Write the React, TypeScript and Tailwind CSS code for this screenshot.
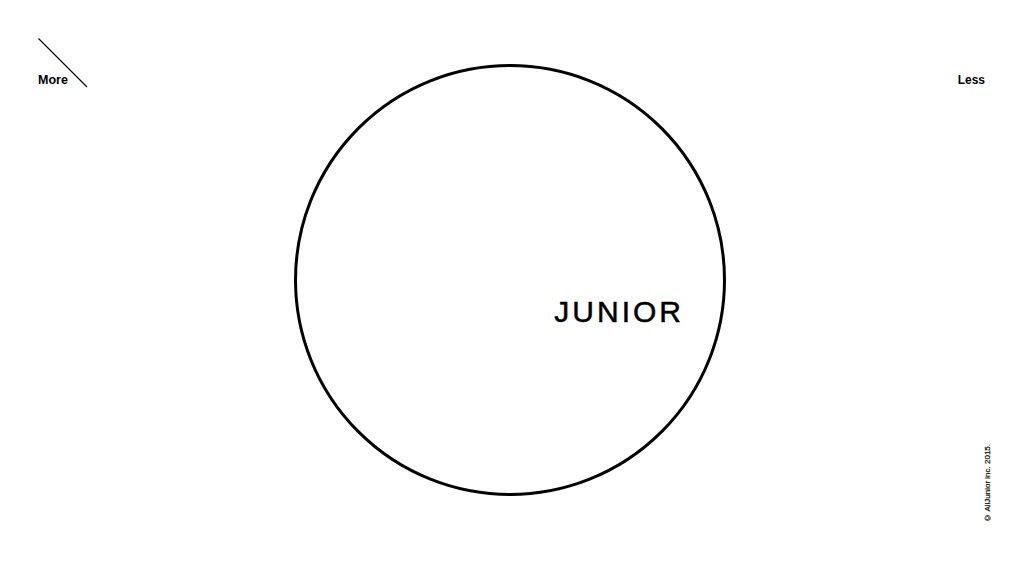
import React from 'react';

const font = { fontFamily: '"Liberation Sans", Arial, sans-serif' };

export default function App() {
    return (
        <div
            className="grid h-[561px] w-full grid-cols-[294px_432px_1fr] overflow-hidden bg-white text-black"
            style={font}
        >
            {/* left column */}
            <div className="pl-[38px] pt-[72px]">
                <a href="#" className="relative block w-fit text-[12.5px] font-bold leading-4">
                    <svg
                        className="pointer-events-none absolute left-0 top-[-34px]"
                        width="50"
                        height="50"
                        viewBox="0 0 50 50"
                    >
                        <line x1="0.5" y1="0.5" x2="49" y2="49" stroke="#000" strokeWidth="1.1" />
                    </svg>
                    More
                </a>
            </div>

            {/* logo */}
            <div className="flex items-center">
                <div className="mt-[-2px] flex h-[432px] w-[432px] items-center justify-end rounded-full border-[3px] border-black pr-[39px] pt-[64px]">
                    <span className="text-[30px] leading-none tracking-[3px] [-webkit-text-stroke:0.5px_black]">
                        JUNIOR
                    </span>
                </div>
            </div>

            {/* right column */}
            <div className="flex flex-col items-end justify-between pb-[39px] pr-[39px] pt-[72px]">
                <a href="#" className="text-[12px] font-bold leading-4">
                    Less
                </a>
                <p className="mr-[-7px] rotate-180 text-[8px] leading-none text-black [-webkit-text-stroke:0.2px_black] [writing-mode:vertical-rl]">
                    © AllJunior inc. 2015.
                </p>
            </div>
        </div>
    );
}
